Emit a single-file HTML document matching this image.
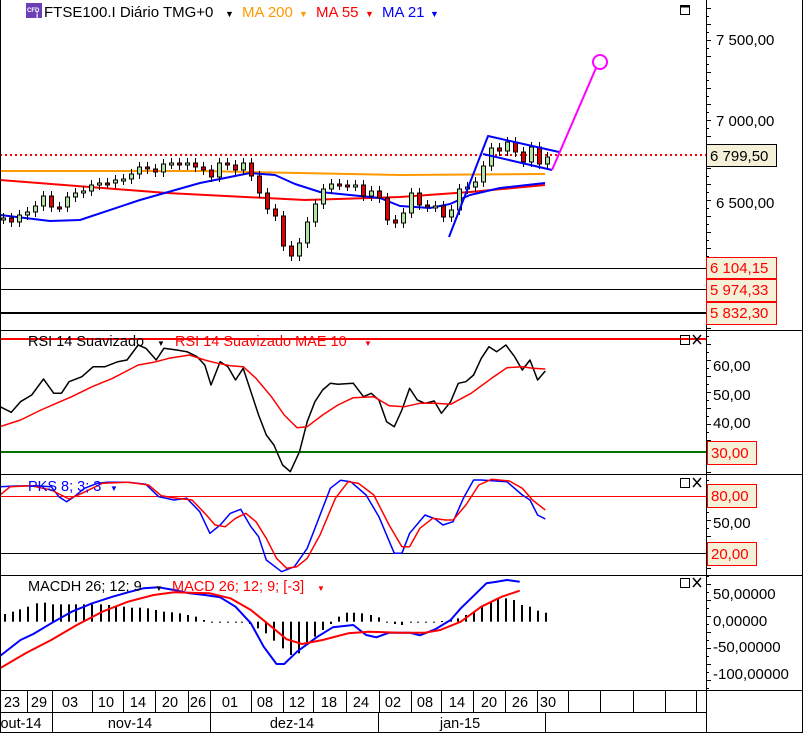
<!DOCTYPE html>
<html><head><meta charset="utf-8"><style>
html,body{margin:0;padding:0;background:#fff}
svg{display:block;font-family:"Liberation Sans",sans-serif}
</style></head><body>
<svg id="s" width="803" height="733" viewBox="0 0 803 733" xmlns="http://www.w3.org/2000/svg">
<rect width="803" height="733" fill="#fff"/>
<g id="g"></g>
<g stroke="#000" stroke-width="1" fill="none">
<line x1="706.5" y1="0" x2="706.5" y2="733"/>
<line x1="0" y1="330.5" x2="803" y2="330.5"/>
<line x1="0" y1="474.5" x2="803" y2="474.5"/>
<line x1="0" y1="575.5" x2="803" y2="575.5"/>
<line x1="0" y1="690.5" x2="803" y2="690.5"/>
<line x1="0" y1="712.5" x2="706" y2="712.5"/>
<line x1="0.5" y1="0" x2="0.5" y2="733"/>
<line x1="802.5" y1="0" x2="802.5" y2="733"/>
<line x1="0" y1="732.5" x2="803" y2="732.5"/>
<line x1="0" y1="268.5" x2="706" y2="268.5"/>
<line x1="0" y1="289.5" x2="706" y2="289.5"/>
<line x1="0" y1="313" x2="706" y2="313" stroke-width="2"/>
</g>
<rect x="26" y="3" width="16" height="15" fill="#6a3fb8"/>
<text x="27" y="12" font-size="6" fill="#fff" font-weight="bold">CFD</text>
<text x="36" y="18" font-size="8" fill="#fff" font-weight="bold">i</text>
<text x="44" y="17" font-size="15" fill="#000">FTSE100.I Diário TMG+0</text>
<text x="225" y="17" font-size="9" fill="#000">▼</text>
<text x="242" y="17" font-size="15" fill="#ff9900">MA 200</text>
<text x="299" y="17" font-size="9" fill="#ff9900">▼</text>
<text x="316" y="17" font-size="15" fill="#ff0000">MA 55</text>
<text x="365" y="17" font-size="9" fill="#ff0000">▼</text>
<text x="382" y="17" font-size="15" fill="#0000ff">MA 21</text>
<text x="430" y="17" font-size="9" fill="#0000ff">▼</text>
<rect x="680.5" y="5.5" width="9" height="9" fill="none" stroke="#000"/>
<line x1="680" y1="6.5" x2="690" y2="6.5" stroke="#000" stroke-width="2"/>
<g stroke="#000" fill="none">
<rect x="680.5" y="335.5" width="9" height="9"/><path d="M693 335l8 9M701 335l-8 9" stroke-width="1.5"/>
<rect x="680.5" y="478.5" width="9" height="9"/><path d="M693 478l8 9M701 478l-8 9" stroke-width="1.5"/>
<rect x="680.5" y="578.5" width="9" height="9"/><path d="M693 578l8 9M701 578l-8 9" stroke-width="1.5"/>
</g>
<g font-size="15" fill="#000">
<text x="716" y="45">7 500,00</text>
<text x="716" y="126">7 000,00</text>
<text x="716" y="208">6 500,00</text>
<text x="713" y="371">60,00</text>
<text x="713" y="400">50,00</text>
<text x="713" y="428">40,00</text>
<text x="713" y="528">50,00</text>
<text x="713" y="599">50,00000</text>
<text x="713" y="626">0,00000</text>
<text x="713" y="652">-50,00000</text>
<text x="713" y="679">-100,00000</text>
</g>
<rect x="706.5" y="144.5" width="70" height="22" fill="#f5f1d8" stroke="#000"/>
<text x="710" y="161" font-size="15">6 799,50</text>
<g fill="#f5f1d8" stroke="#f00">
<rect x="706.5" y="257.5" width="70" height="21"/>
<rect x="706.5" y="279.5" width="70" height="22"/>
<rect x="706.5" y="302.5" width="70" height="22"/>
<rect x="707.5" y="441.5" width="49" height="23"/>
<rect x="707.5" y="484.5" width="49" height="23"/>
<rect x="707.5" y="542.5" width="49" height="23"/>
</g>
<g font-size="15" fill="#f00">
<text x="710" y="273">6 104,15</text>
<text x="710" y="295">5 974,33</text>
<text x="710" y="318">5 832,30</text>
<text x="711" y="458">30,00</text>
<text x="711" y="501">80,00</text>
<text x="711" y="559">20,00</text>
</g>
<text x="28" y="346" font-size="14.5" fill="#000">RSI 14 Suavizado</text>
<text x="157" y="346" font-size="8">▼</text>
<text x="175" y="346" font-size="14.5" fill="#f00">RSI 14 Suavizado MAE 10</text>
<text x="364" y="346" font-size="8" fill="#f00">▼</text>
<text x="28" y="491" font-size="14.5" fill="#0000ff">PKS 8; 3; 3</text>
<text x="110" y="491" font-size="8" fill="#0000ff">▼</text>
<text x="28" y="591" font-size="14.5" fill="#000">MACDH 26; 12; 9</text>
<text x="155" y="591" font-size="8">▼</text>
<text x="172" y="591" font-size="14.5" fill="#f00">MACD 26; 12; 9; [-3]</text>
<text x="317" y="591" font-size="8" fill="#f00">▼</text>
<g font-size="14.5" fill="#000" text-anchor="middle">
<text x="12" y="707">23</text><text x="39" y="707">29</text><text x="70" y="707">03</text><text x="106" y="707">10</text><text x="138" y="707">14</text><text x="170" y="707">20</text><text x="198" y="707">26</text><text x="230" y="707">01</text><text x="265" y="707">08</text><text x="297" y="707">12</text><text x="329" y="707">18</text><text x="361" y="707">24</text><text x="393" y="707">02</text><text x="425" y="707">08</text><text x="457" y="707">14</text><text x="489" y="707">20</text><text x="520" y="707">26</text><text x="548" y="707">30</text>
<text x="21" y="728">out-14</text><text x="130" y="728">nov-14</text><text x="292" y="728">dez-14</text><text x="460" y="728">jan-15</text>
</g>
</svg>
<script>
var NS="http://www.w3.org/2000/svg",g=document.getElementById('g');
function el(t,a){var e=document.createElementNS(NS,t);for(var k in a)e.setAttribute(k,a[k]);g.appendChild(e);return e;}
function pl(pts,c,w,fx,fy,ox,oy){var d=pts.map(function(p,i){return (i?'L':'M')+(p[0]/fx+ox).toFixed(1)+' '+(p[1]/fy+oy).toFixed(1)}).join('');el('path',{d:d,stroke:c,'stroke-width':w,fill:'none','stroke-linejoin':'round'});}
[27,52,92,123,155,188,210,251,283,313,346,379,411,441,473,505,537,568,600,633,665,696].forEach(function(x){el('line',{x1:x+.5,y1:690,x2:x+.5,y2:712,stroke:'#000'})});
[52,210,378,545].forEach(function(x){el('line',{x1:x+.5,y1:712,x2:x+.5,y2:733,stroke:'#000'})});
for(var y=8;y<690;y+=8){el('line',{x1:706,y1:y+.5,x2:(y%16==8?711:709),y2:y+.5,stroke:'#000'})}
pl([[0,171],[200,171],[400,175],[545,174]],'#ff9900',2,1,1,0,0);
pl([[0,180],[167,193],[305,200],[400,197],[470,192],[545,185]],'#ff0000',2,1,1,0,0);
pl([[0,215],[50,221],[80,220],[140,200],[200,183],[250,173],[275,175],[295,184],[320,192],[380,198],[400,206],[430,208],[450,204],[470,195],[500,188],[545,183]],'#0000ff',2,1,1,0,0);
el('line',{x1:0,y1:155,x2:706,y2:155,stroke:'#f00','stroke-width':2,'stroke-dasharray':'2,3'});
var c=[218,222,215,212,206,196,207,207,197,193,191,185,183,183,180,179,174,167,169,172,164,163,165,163,167,170,177,163,165,170,163,176,193,209,216,246,256,243,222,204,189,184,185,186,185,196,191,198,220,223,213,193,205,207,206,217,210,189,187,182,166,148,151,142,152,162,147,164,157];
var prev=219;
c.forEach(function(cl,i){var x=3+i*8,o=prev,hi=Math.min(o,cl)-5,lo=Math.max(o,cl)+5;
 el('line',{x1:x+.5,y1:hi,x2:x+.5,y2:lo,stroke:'#000'});
 var t=Math.min(o,cl),h=Math.max(Math.abs(o-cl),2);
 el('rect',{x:x-1.5,y:t,width:4,height:h,fill:cl<o?'#aee6a0':'#e00000',stroke:'#000','stroke-width':1});
 prev=cl;});
pl([[449,237],[488,136],[559,152]],'#0000ff',2,1,1,0,0);
pl([[483,154],[552,170]],'#0000ff',2,1,1,0,0);
pl([[552,170],[596,68]],'#ff00ff',2,1,1,0,0);
el('circle',{cx:600,cy:62,r:7,fill:'#fff',stroke:'#ff00ff','stroke-width':2});
el('line',{x1:0,y1:339,x2:706,y2:339,stroke:'#f00','stroke-width':2});
el('line',{x1:0,y1:452,x2:706,y2:452,stroke:'#007000','stroke-width':2});
pl([[0,245],[22,262],[40,230],[62,210],[85,162],[105,205],[120,205],[135,170],[160,155],[182,125],[205,125],[230,110],[248,105],[270,60],[285,70],[305,105],[320,70],[345,75],[365,80],[385,95],[400,120],[412,180],[430,110],[445,125],[460,165],[475,130],[490,200],[505,270],[520,330],[535,360],[552,420],[567,440],[585,380],[600,290],[615,230],[630,195],[645,175],[660,178],[690,175],[710,215],[725,205],[740,225],[755,290],[770,305],[785,255],[800,190],[815,225],[830,235],[848,228],[862,265],[880,230],[895,175],[910,170],[925,150],[940,100],[955,65],[970,80],[988,60],[1005,95],[1020,135],[1035,105],[1050,165],[1065,138]],'#000',1.5,1.953,3,0,325);
pl([[0,305],[40,285],[80,255],[110,235],[140,215],[180,185],[220,160],[270,120],[300,112],[330,100],[370,90],[400,105],[420,113],[450,122],[475,125],[500,160],[530,215],[555,270],[580,308],[600,305],[630,270],[660,240],[690,218],[730,215],[760,242],[790,245],[820,235],[850,235],[880,238],[920,205],[960,160],[990,128],[1020,125],[1040,130],[1065,132]],'#f00',1.5,1.953,3,0,325);
el('line',{x1:0,y1:496.5,x2:706,y2:496.5,stroke:'#f00'});
el('line',{x1:0,y1:553.5,x2:706,y2:553.5,stroke:'#000'});
pl([[0,485],[30,483],[70,482],[100,485],[115,515],[130,530],[145,515],[165,490],[190,475],[210,472],[250,472],[285,478],[310,515],[340,525],[365,520],[390,560],[410,625],[430,600],[450,565],[470,553],[490,605],[505,635],[520,705],[550,740],[575,725],[600,670],[620,590],[645,490],[665,466],[685,470],[715,510],[740,575],[770,685],[785,685],[800,625],[830,570],[850,582],[865,600],[885,590],[905,520],[925,465],[940,465],[990,470],[1020,510],[1035,525],[1050,570],[1065,582]],'#0000ff',1.5,1.953,3,0,325);
pl([[0,510],[20,485],[60,482],[100,495],[135,522],[160,505],[200,475],[250,472],[290,480],[315,512],[345,520],[375,525],[400,565],[420,600],[440,605],[460,580],[480,565],[500,590],[520,640],[540,700],[560,730],[580,725],[600,700],[625,630],[655,520],[680,470],[700,475],[730,510],[760,600],[785,665],[800,665],[820,610],[845,580],[870,585],[885,585],[910,540],[935,480],[960,463],[995,468],[1020,490],[1040,525],[1065,555]],'#f00',1.5,1.953,3,0,325);
var hb=[[8,162],[23,155],[38,148],[53,140],[70,130],[86,128],[101,133],[117,133],[132,133],[147,133],[163,133],[178,133],[195,133],[210,135],[225,138],[241,140],[256,143],[272,143],[287,145],[303,150],[318,155],[334,157],[349,160],[365,165],[380,170],[396,180],[412,185],[427,185],[443,185],[458,185],[470,185],[486,192],[502,205],[518,220],[534,242],[550,265],[566,285],[582,280],[598,255],[614,230],[628,210],[645,192],[660,170],[676,158],[690,158],[706,160],[722,165],[738,172],[753,185],[769,192],[784,195],[800,185],[815,185],[830,185],[846,185],[862,183],[878,180],[893,175],[908,165],[924,155],[940,140],[956,125],[970,115],[986,115],[1002,120],[1018,135],[1033,140],[1048,152],[1064,158]];
hb.forEach(function(b){var x=Math.round(b[0]/1.953)+.5,y=b[1]/3+560,z=621.7;var t=Math.min(y,z),h=Math.max(Math.abs(y-z),1);el('rect',{x:x-0.5,y:t,width:2,height:h,fill:'#000'});});
pl([[0,288],[40,240],[65,222],[100,190],[140,155],[180,130],[220,110],[250,97],[280,85],[310,82],[340,90],[370,100],[400,105],[430,112],[460,140],[490,190],[515,260],[540,312],[555,312],[580,275],[620,230],[650,202],[690,195],[715,225],[735,232],[760,218],[800,218],[820,226],[850,208],[880,180],[900,145],[930,100],[950,70],[970,65],[990,60],[1015,65]],'#0000ff',2,1.953,3,0,560);
pl([[0,325],[50,280],[100,240],[150,195],[200,155],[250,125],[300,105],[340,97],[370,98],[410,100],[450,115],[490,150],[530,200],[560,238],[590,252],[630,240],[680,220],[720,215],[780,218],[830,218],[860,210],[900,185],[940,140],[980,110],[1015,92]],'#f00',2,1.953,3,0,560);
</script>
</body></html>
